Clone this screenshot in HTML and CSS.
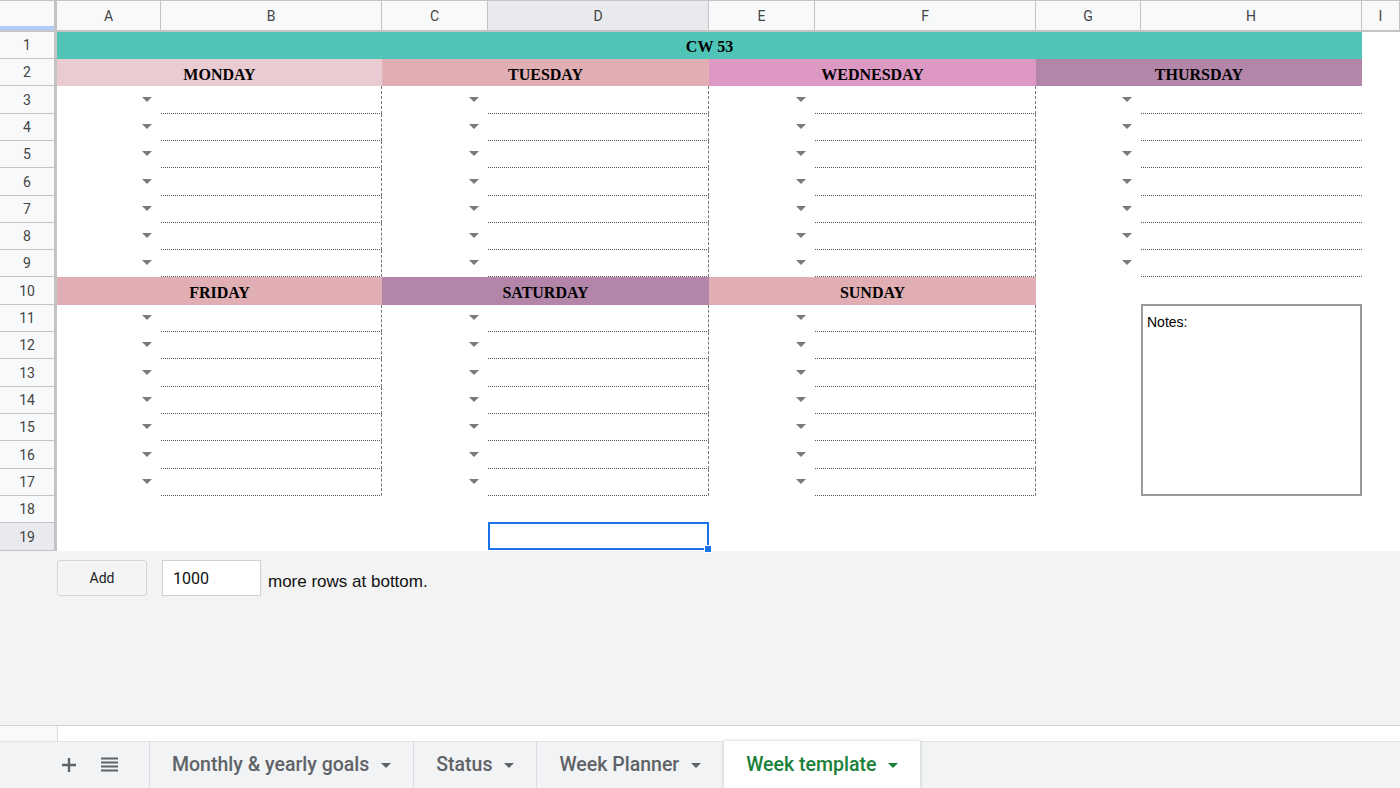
FILE: index.html
```html
<!DOCTYPE html>
<html lang="en">
<head>
    <meta charset="UTF-8">
    <meta name="viewport" content="width=device-width, initial-scale=1.0">
    <title>Week template</title>
    <link rel="stylesheet" href="styles.css">
</head>
<body>
    <div class="sheet">
        <!-- column headers -->
        <div class="corner"><div class="freeze"></div></div>
        <div class="col-head">A</div>
        <div class="col-head">B</div>
        <div class="col-head">C</div>
        <div class="col-head active">D</div>
        <div class="col-head">E</div>
        <div class="col-head">F</div>
        <div class="col-head">G</div>
        <div class="col-head">H</div>
        <div class="col-head">I</div>

        <div class="row-head">1</div>
        <div class="banner">CW 53</div>

        <div class="row-head">2</div>
        <div class="day monday">MONDAY</div>
        <div class="day tuesday">TUESDAY</div>
        <div class="day wednesday">WEDNESDAY</div>
        <div class="day thursday">THURSDAY</div>

        <div class="row-head">3</div>
        <div class="entry sep"><div class="pick"></div><div class="line"></div></div>
        <div class="entry sep"><div class="pick"></div><div class="line"></div></div>
        <div class="entry sep"><div class="pick"></div><div class="line"></div></div>
        <div class="entry"><div class="pick"></div><div class="line"></div></div>

        <div class="row-head">4</div>
        <div class="entry sep"><div class="pick"></div><div class="line"></div></div>
        <div class="entry sep"><div class="pick"></div><div class="line"></div></div>
        <div class="entry sep"><div class="pick"></div><div class="line"></div></div>
        <div class="entry"><div class="pick"></div><div class="line"></div></div>

        <div class="row-head">5</div>
        <div class="entry sep"><div class="pick"></div><div class="line"></div></div>
        <div class="entry sep"><div class="pick"></div><div class="line"></div></div>
        <div class="entry sep"><div class="pick"></div><div class="line"></div></div>
        <div class="entry"><div class="pick"></div><div class="line"></div></div>

        <div class="row-head">6</div>
        <div class="entry sep"><div class="pick"></div><div class="line"></div></div>
        <div class="entry sep"><div class="pick"></div><div class="line"></div></div>
        <div class="entry sep"><div class="pick"></div><div class="line"></div></div>
        <div class="entry"><div class="pick"></div><div class="line"></div></div>

        <div class="row-head">7</div>
        <div class="entry sep"><div class="pick"></div><div class="line"></div></div>
        <div class="entry sep"><div class="pick"></div><div class="line"></div></div>
        <div class="entry sep"><div class="pick"></div><div class="line"></div></div>
        <div class="entry"><div class="pick"></div><div class="line"></div></div>

        <div class="row-head">8</div>
        <div class="entry sep"><div class="pick"></div><div class="line"></div></div>
        <div class="entry sep"><div class="pick"></div><div class="line"></div></div>
        <div class="entry sep"><div class="pick"></div><div class="line"></div></div>
        <div class="entry"><div class="pick"></div><div class="line"></div></div>

        <div class="row-head">9</div>
        <div class="entry sep"><div class="pick"></div><div class="line"></div></div>
        <div class="entry sep"><div class="pick"></div><div class="line"></div></div>
        <div class="entry sep"><div class="pick"></div><div class="line"></div></div>
        <div class="entry"><div class="pick"></div><div class="line"></div></div>

        <div class="row-head">10</div>
        <div class="day friday">FRIDAY</div>
        <div class="day saturday">SATURDAY</div>
        <div class="day sunday">SUNDAY</div>

        <div class="notes">Notes:</div>

        <div class="row-head">11</div>
        <div class="entry sep"><div class="pick"></div><div class="line"></div></div>
        <div class="entry sep"><div class="pick"></div><div class="line"></div></div>
        <div class="entry sep"><div class="pick"></div><div class="line"></div></div>

        <div class="row-head">12</div>
        <div class="entry sep"><div class="pick"></div><div class="line"></div></div>
        <div class="entry sep"><div class="pick"></div><div class="line"></div></div>
        <div class="entry sep"><div class="pick"></div><div class="line"></div></div>

        <div class="row-head">13</div>
        <div class="entry sep"><div class="pick"></div><div class="line"></div></div>
        <div class="entry sep"><div class="pick"></div><div class="line"></div></div>
        <div class="entry sep"><div class="pick"></div><div class="line"></div></div>

        <div class="row-head">14</div>
        <div class="entry sep"><div class="pick"></div><div class="line"></div></div>
        <div class="entry sep"><div class="pick"></div><div class="line"></div></div>
        <div class="entry sep"><div class="pick"></div><div class="line"></div></div>

        <div class="row-head">15</div>
        <div class="entry sep"><div class="pick"></div><div class="line"></div></div>
        <div class="entry sep"><div class="pick"></div><div class="line"></div></div>
        <div class="entry sep"><div class="pick"></div><div class="line"></div></div>

        <div class="row-head">16</div>
        <div class="entry sep"><div class="pick"></div><div class="line"></div></div>
        <div class="entry sep"><div class="pick"></div><div class="line"></div></div>
        <div class="entry sep"><div class="pick"></div><div class="line"></div></div>

        <div class="row-head">17</div>
        <div class="entry sep"><div class="pick"></div><div class="line"></div></div>
        <div class="entry sep"><div class="pick"></div><div class="line"></div></div>
        <div class="entry sep"><div class="pick"></div><div class="line"></div></div>

        <div class="row-head">18</div>

        <div class="row-head active">19</div>
        <div class="selected"><span class="handle"></span></div>
    </div>

    <div class="more-rows">
        <button class="add-btn">Add</button>
        <input class="rows-input" type="text" value="1000">
        <span>more rows at bottom.</span>
    </div>

    <div class="scroll-strip"><div class="scroll-corner"></div></div>

    <div class="tab-bar">
        <div class="tab-tools">
            <svg width="14" height="14" viewBox="0 0 14 14"><path d="M7 0v14M0 7h14" stroke="#5f6368" stroke-width="2.4"/></svg>
            <svg width="17" height="15" viewBox="0 0 17 15"><path d="M0 1.5h17M0 5.5h17M0 9.5h17M0 13.5h17" stroke="#5f6368" stroke-width="2.2"/></svg>
        </div>
        <div class="tab">Monthly &amp; yearly goals<span class="caret"></span></div>
        <div class="tab">Status<span class="caret"></span></div>
        <div class="tab">Week Planner<span class="caret"></span></div>
        <div class="tab current">Week template<span class="caret"></span></div>
    </div>
</body>
</html>
```

FILE: styles.css
```css
body {
    margin: 0;
    width: 1400px;
    height: 788px;
    overflow: hidden;
    background-color: white;
    font-family: Roboto, "Liberation Sans", sans-serif;
}
.sheet {
    display: grid;
    grid-template-columns: 57px 104px 221px 106px 221px 106px 221px 105px 221px 38px;
    grid-template-rows: 32px 27px 27px 28px 27px 27px 28px 27px 27px 27px 28px 27px 27px 28px 27px 27px 28px 27px 27px 28px;
    height: 551px;
}
.corner {
    grid-column: 1;
    display: flex;
    align-items: flex-end;
    background-color: #f8f9fa;
    border-top: 1px solid #c4c4c4;
    border-right: 3px solid #c4c4c4;
    border-bottom: 2px solid #c4c4c4;
}
.freeze {
    width: 100%;
    height: 4px;
    background-color: #aecbfa;
}
.col-head {
    display: flex;
    align-items: center;
    justify-content: center;
    background-color: #f8f9fa;
    border-top: 1px solid #c4c4c4;
    border-right: 1px solid #c4c4c4;
    border-bottom: 2px solid #c4c4c4;
    font-size: 14px;
    color: #444;
}
.col-head.active {
    background-color: #e8eaed;
}
.row-head {
    grid-column: 1;
    display: flex;
    align-items: center;
    justify-content: center;
    background-color: #f8f9fa;
    border-right: 3px solid #c4c4c4;
    border-bottom: 1px solid #c4c4c4;
    font-size: 14px;
    color: #444;
}
.row-head.active {
    background-color: #e8eaed;
}
.banner {
    grid-column: span 8;
    display: flex;
    align-items: center;
    justify-content: center;
    padding-top: 3px;
    background-color: #50c5b7;
    font-family: "Liberation Serif", serif;
    font-weight: bold;
    font-size: 16px;
    color: #000;
}
.day {
    grid-column: span 2;
    display: flex;
    align-items: center;
    justify-content: center;
    padding-top: 4px;
    font-family: "Liberation Serif", serif;
    font-weight: bold;
    font-size: 16px;
    color: #000;
}
.monday { background-color: #eacbd1; }
.tuesday, .friday, .sunday { background-color: #e0aeb3; }
.wednesday { background-color: #dd98c3; }
.thursday, .saturday { background-color: #b386a9; }

.entry {
    grid-column: span 2;
    display: flex;
}
.pick {
    flex: 1;
    display: flex;
    align-items: center;
    justify-content: flex-end;
    padding-right: 9px;
    padding-bottom: 2px;
}
.pick::after {
    content: "";
    border-left: 5px solid transparent;
    border-right: 5px solid transparent;
    border-top: 5px solid #7a7a7a;
}
.line {
    width: 221px;
    box-sizing: border-box;
    border-bottom: 1px dotted #555;
}
.sep .line {
    border-right: 1px dashed #777;
}
.notes {
    grid-area: 12 / 9 / span 7 / span 1;
    margin-top: -1px;
    padding: 8px 4px;
    border: 2px solid #9a9a9a;
    font-family: "Liberation Sans", Arial, sans-serif;
    font-size: 14px;
    color: #000;
}
.selected {
    grid-column: 5;
    position: relative;
    margin-top: -1px;
    margin-bottom: 1px;
    border: 2px solid #1a73e8;
}
.handle {
    position: absolute;
    right: -5px;
    bottom: -5px;
    width: 6px;
    height: 6px;
    background-color: #1a73e8;
    border: 1px solid white;
}

.more-rows {
    display: flex;
    align-items: flex-start;
    height: 174px;
    box-sizing: border-box;
    padding: 9px 0 0 57px;
    background-color: #f3f3f3;
    font-family: "Liberation Sans", Arial, sans-serif;
    font-size: 17px;
    color: #111;
}
.add-btn {
    width: 90px;
    height: 36px;
    margin-right: 15px;
    border: 1px solid #d6d6d6;
    border-radius: 3px;
    background-color: #f4f4f4;
    font-family: Roboto, "Liberation Sans", sans-serif;
    font-size: 14px;
    color: #222;
}
.rows-input {
    width: 99px;
    height: 36px;
    box-sizing: border-box;
    margin: 0 7px 0 0;
    padding: 0 10px;
    border: 1px solid #d0d0d0;
    font-family: Roboto, "Liberation Sans", sans-serif;
    font-size: 16px;
    color: #111;
}
.more-rows span {
    margin-top: 12px;
}
.scroll-strip {
    display: flex;
    height: 16px;
    box-sizing: border-box;
    border-top: 1px solid #d4d4d4;
    background-color: white;
}
.scroll-corner {
    width: 57px;
    background-color: #f8f9fa;
    border-right: 1px solid #dadce0;
}
.tab-bar {
    display: flex;
    height: 47px;
    background-color: #f1f3f4;
    box-shadow: inset 0 1px 0 #e3e3e3;
}
.tab-tools {
    width: 149px;
    display: flex;
    align-items: center;
    padding-left: 62px;
    box-sizing: border-box;
    gap: 25px;
}
.tab {
    display: flex;
    align-items: center;
    gap: 12px;
    padding: 0 22px 0 22px;
    border-left: 1px solid #dadce0;
    font-size: 19.5px;
    font-weight: 500;
    color: #5f6368;
}
.caret {
    border-left: 5px solid transparent;
    border-right: 5px solid transparent;
    border-top: 5px solid currentColor;
    margin-top: 2px;
}
.tab.current {
    background-color: white;
    color: #188038;
    border-left: none;
    box-shadow: 0 0 3px rgba(60, 64, 67, 0.3);
    margin-left: 1px;
}
```
